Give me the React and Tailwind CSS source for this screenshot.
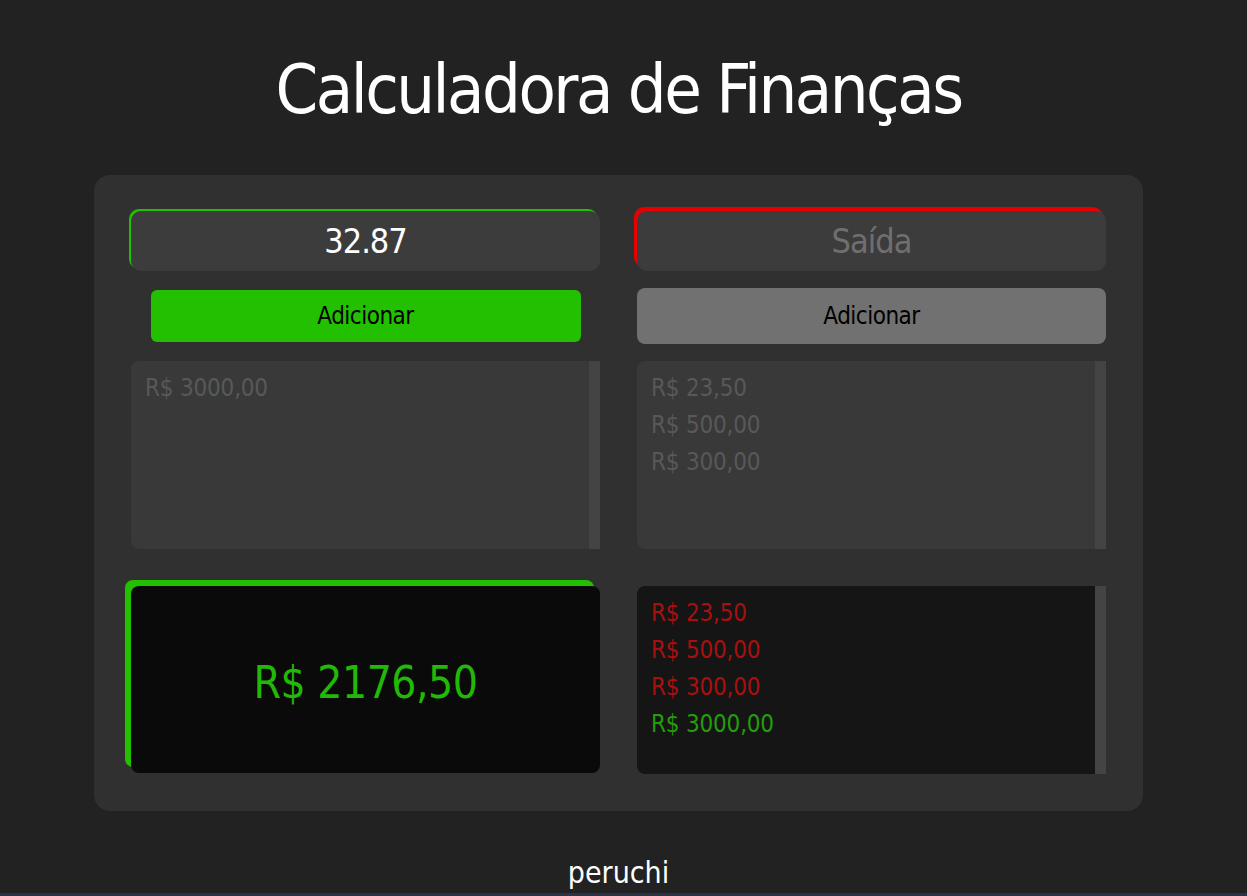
const font = {
  fontFamily: '"DejaVu Sans Condensed", "Liberation Sans Narrow", Roboto, sans-serif',
};

const entradas = ['R$ 3000,00'];
const saidas = ['R$ 23,50', 'R$ 500,00', 'R$ 300,00'];
const historico = [
  { valor: 'R$ 23,50', tipo: 'saida' },
  { valor: 'R$ 500,00', tipo: 'saida' },
  { valor: 'R$ 300,00', tipo: 'saida' },
  { valor: 'R$ 3000,00', tipo: 'entrada' },
];

const Lista = ({ itens, bg, cor }) => (
  <div className={`flex h-[188px] rounded-l-lg overflow-hidden ${bg}`}>
    <ul className="flex-1 px-[14px] pt-[14px]">
      {itens.map((item, i) => (
        <li
          key={i}
          className={`h-[37px] leading-[26px] text-[24px] tracking-[-0.2px] ${cor(item)}`}
        >
          {typeof item === 'string' ? item : item.valor}
        </li>
      ))}
    </ul>
    {/* trilho da barra de rolagem */}
    <div className="w-[11px] bg-[#444444]" />
  </div>
);

export default function App() {
  return (
    <div
      className="min-h-[896px] bg-[#222222] text-white flex flex-col items-center pr-[10px]"
      style={font}
    >
      <h1 className="mt-[50px] text-[68px] leading-[80px] text-white tracking-[-2.5px]">
        Calculadora de Finanças
      </h1>

      <main className="mt-[45px] w-[1049px] bg-[#303030] rounded-2xl px-[37px] pt-[36px] pb-[37px] grid grid-cols-2 gap-x-[37px]">
        {/* Entradas */}
        <div className="flex flex-col">
          <input
            readOnly
            value="32.87"
            className="h-[60px] w-full rounded-[10px] bg-[#3c3c3c] text-center text-[34px] tracking-[-1px] text-white outline-none shadow-[-2px_-2px_0_#22c000]"
            style={font}
          />
          <div className="h-[56px] mt-[17px] flex items-center justify-center">
            <button
              className="w-[430px] h-[52px] rounded-md bg-[#22c000] text-black text-[24px] tracking-[-0.5px]"
              style={font}
            >
              Adicionar
            </button>
          </div>
          <div className="mt-[17px]">
            <Lista itens={entradas} bg="bg-[#393939]" cor={() => 'text-[#585858]'} />
          </div>
          <div className="mt-[37px] h-[187px] rounded-lg bg-[#0a0a0a] shadow-[-6px_-6px_0_#22c000] flex items-center justify-center pt-[6px]">
            <span className="text-[44px] tracking-[-0.5px] text-[#22b808]">R$ 2176,50</span>
          </div>
        </div>

        {/* Saídas */}
        <div className="flex flex-col">
          <input
            readOnly
            placeholder="Saída"
            className="h-[60px] w-full rounded-[10px] bg-[#3c3c3c] text-center text-[34px] tracking-[-1px] text-white placeholder:text-[#6f6f6f] outline-none shadow-[-3px_-4px_0_#e80000]"
            style={font}
          />
          <button
            className="mt-[17px] h-[56px] w-full rounded-lg bg-[#717171] text-black text-[24px] tracking-[-0.5px]"
            style={font}
          >
            Adicionar
          </button>
          <div className="mt-[17px]">
            <Lista itens={saidas} bg="bg-[#393939]" cor={() => 'text-[#585858]'} />
          </div>
          <div className="mt-[37px]">
            <Lista
              itens={historico}
              bg="bg-[#151515]"
              cor={(h) => (h.tipo === 'saida' ? 'text-[#a81010]' : 'text-[#249c0c]')}
            />
          </div>
        </div>
      </main>

      <footer className="mt-auto w-full flex flex-col items-center">
        <p className="text-[30px] leading-[34px] text-white mb-[3px]">peruchi</p>
        <div className="w-[calc(100%+10px)] -mr-[10px] h-[3px] bg-[#2b3447]" />
      </footer>
    </div>
  );
}
